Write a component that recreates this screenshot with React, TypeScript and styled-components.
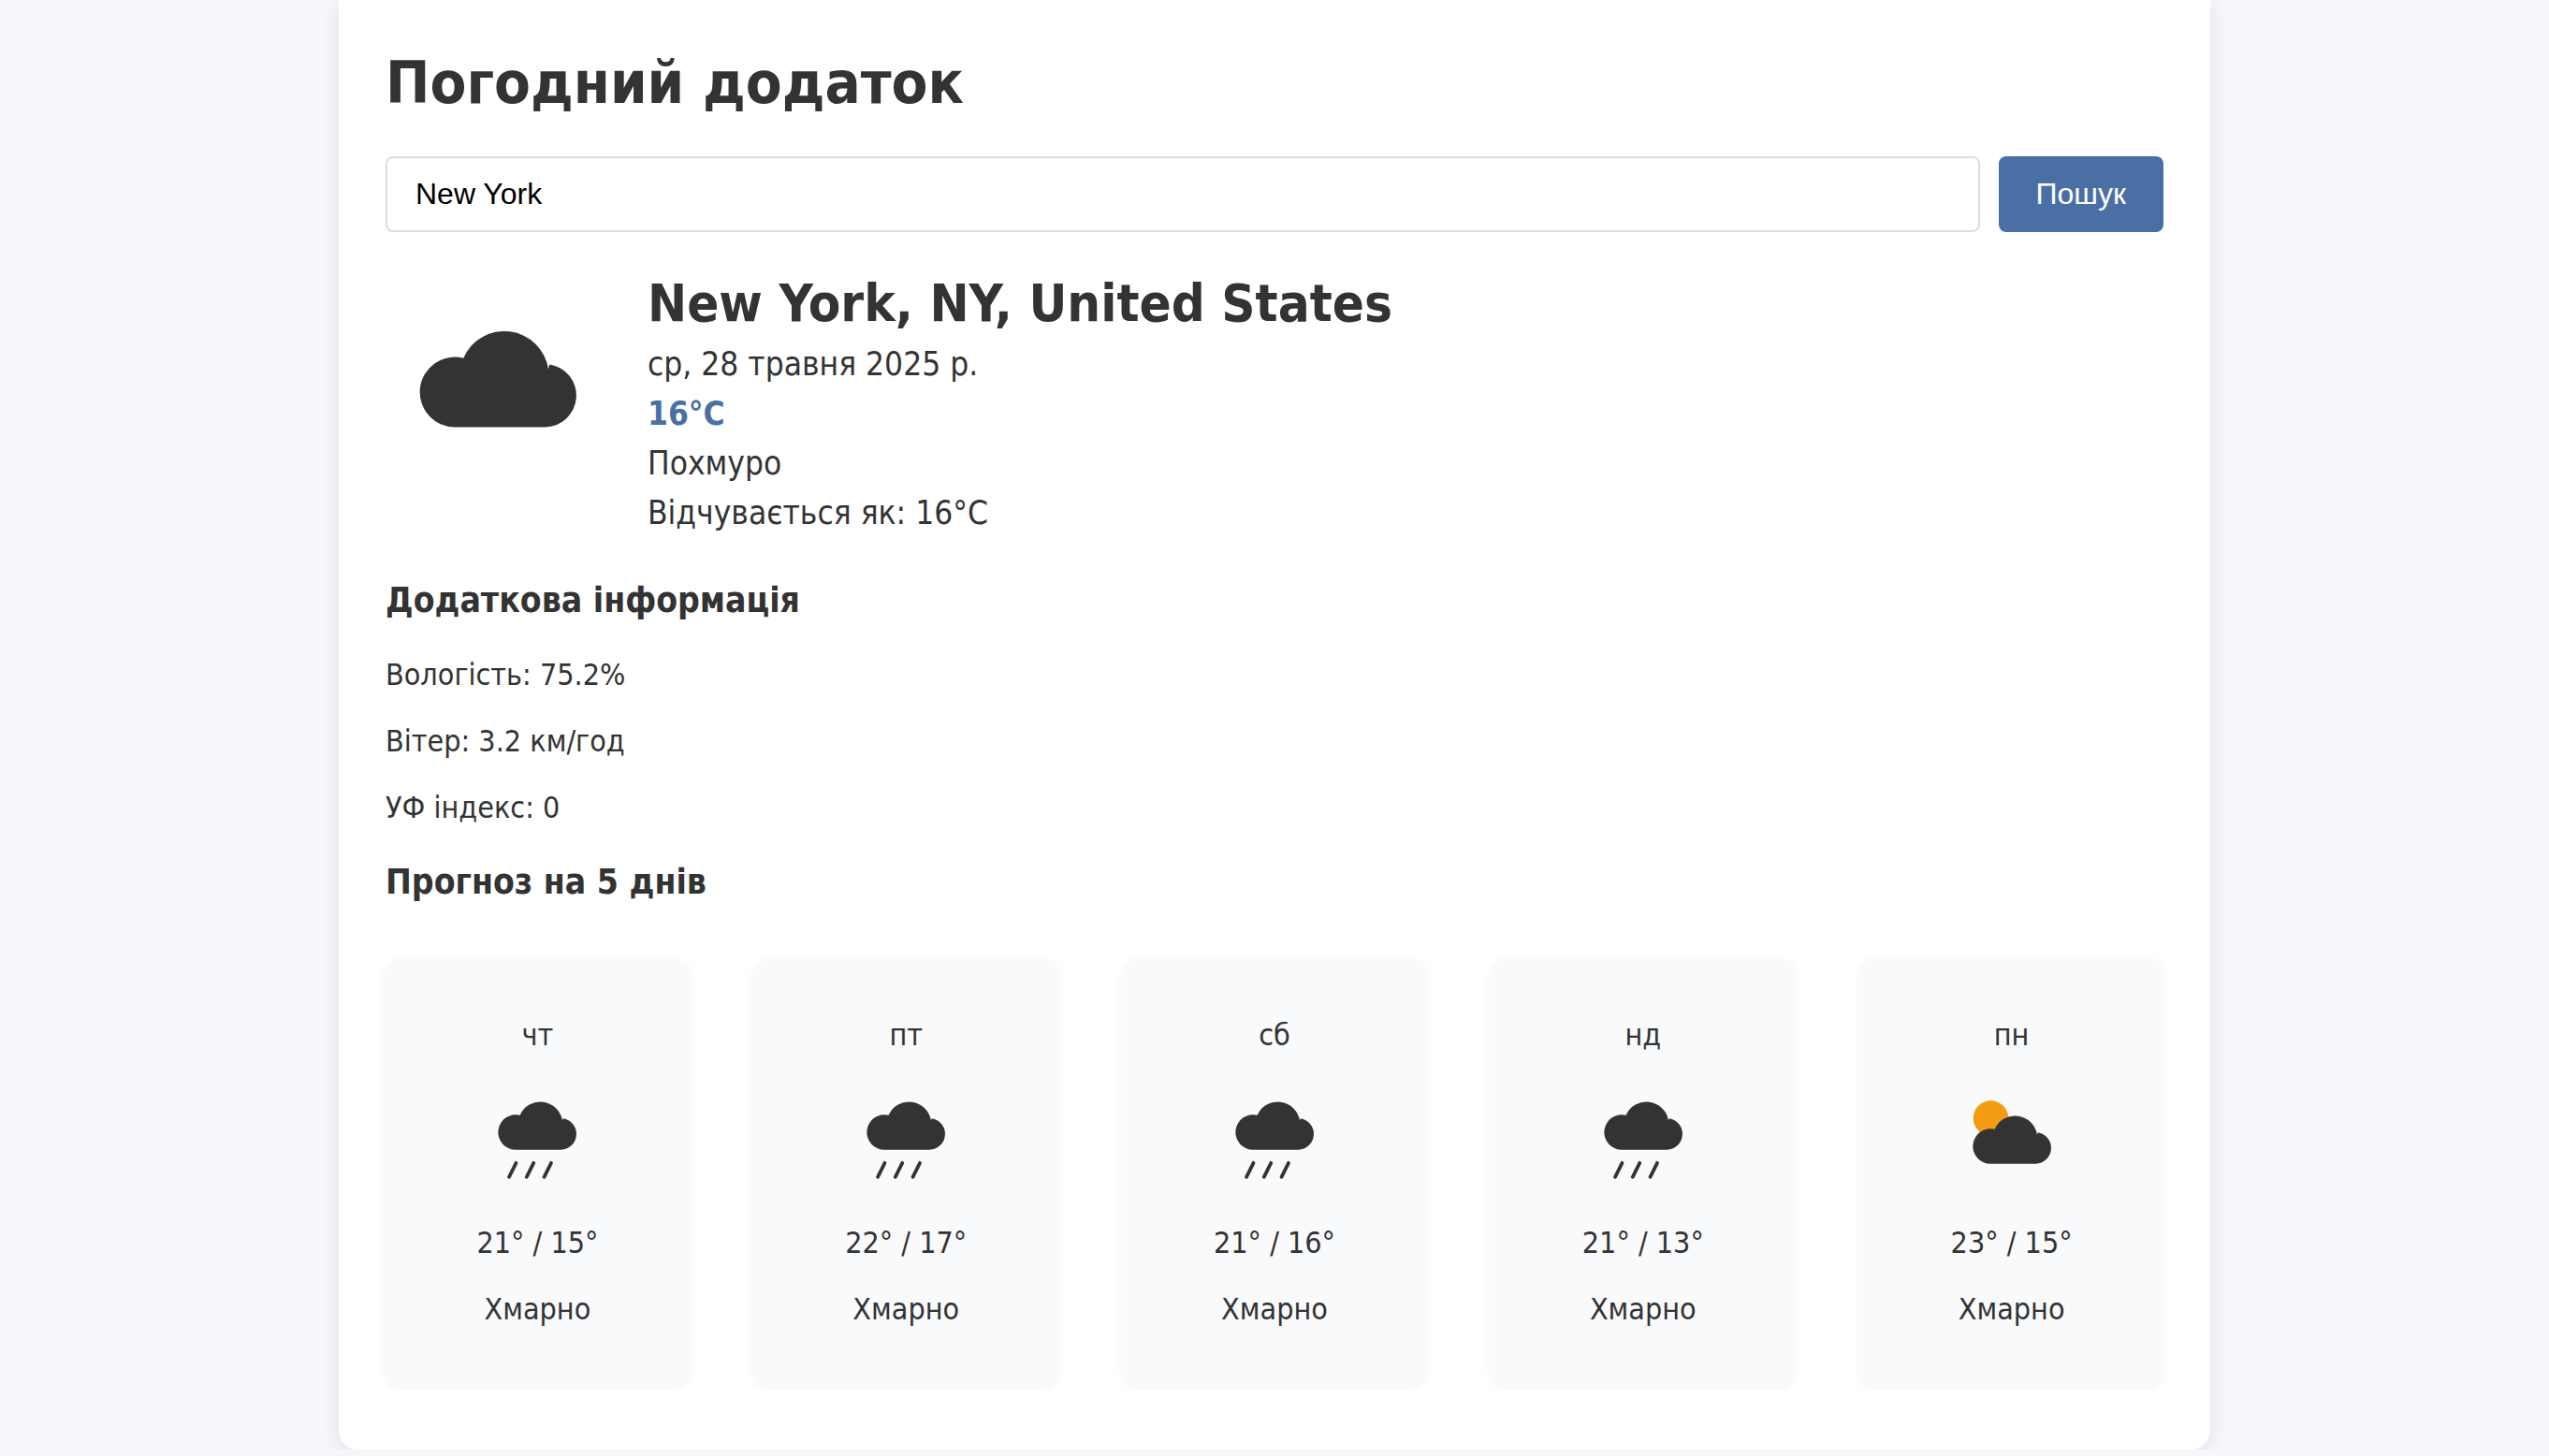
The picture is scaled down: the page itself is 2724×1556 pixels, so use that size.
import React, { useState } from "react";
import styled, { createGlobalStyle } from "styled-components";

const GlobalStyle = createGlobalStyle`
  *, *::before, *::after { box-sizing: border-box; }
  body {
    margin: 0;
    background: #f5f7fb;
    color: #333;
    font-family: Tahoma, "DejaVu Sans Condensed", "Noto Sans", sans-serif;
    font-size: 32px;
    line-height: 51px;
  }
  h1, h2, h3, p { margin: 0; }
`;

const Container = styled.main`
  max-width: 2000px;
  margin: 0 auto;
  padding: 38px 50px 68px;
  background: #fff;
  border-radius: 0 0 20px 20px;
  box-shadow: 0 4px 20px rgba(0, 0, 0, 0.1);
`;

const Title = styled.h1`
  font-size: 63px;
  line-height: 102px;
`;

const SearchForm = styled.form`
  display: flex;
  gap: 20px;
  margin-top: 27px;
`;

const SearchInput = styled.input`
  flex: 1;
  min-width: 0;
  padding: 20px 30px;
  border: 2px solid #ddd;
  border-radius: 8px;
  background: #fff;
  color: #000;
  font: 32px/37px Arial, "Liberation Sans", sans-serif;
`;

const SearchButton = styled.button`
  padding: 20px 40px;
  border: 0;
  border-radius: 8px;
  background: #4a6fa5;
  color: #fff;
  font: 32px/37px Arial, "Liberation Sans", sans-serif;
  cursor: pointer;
`;

const Current = styled.section`
  display: flex;
  align-items: center;
  gap: 40px;
  margin: 37px 0;
`;

const IconSvg = styled.svg<{ $size: number }>`
  display: block;
  flex: none;
  width: ${(p) => p.$size}px;
  height: ${(p) => p.$size}px;
`;

const CurrentIcon = styled.div`
  padding-bottom: 22px;
`;

const City = styled.h2`
  font-size: 56px;
  line-height: 78px;
`;

const CurrentLine = styled.p<{ $accent?: boolean }>`
  font-size: 35px;
  line-height: 53px;
  ${(p) => p.$accent && "color: #4a6fa5; font-weight: bold;"}
`;

const SectionTitle = styled.h3`
  font-size: 37px;
  line-height: 60px;
`;

const Details = styled.div`
  display: flex;
  flex-direction: column;
  gap: 20px;
  margin: 24px 0;
`;

const Forecast = styled.div`
  display: grid;
  grid-template-columns: repeat(5, 1fr);
  gap: 69px;
  margin-top: 52px;
`;

const DayCard = styled.article`
  display: flex;
  flex-direction: column;
  align-items: center;
  padding: 56px 20px;
  border-radius: 16px;
  background: #f9fafc;
  box-shadow: 0 2px 10px rgba(0, 0, 0, 0.05);
  text-align: center;
`;

const DayIcon = styled.div`
  margin: 18px 0 33px;
`;

const DayText = styled.p`
  margin-top: 20px;
`;

type Kind = "cloud" | "rain" | "partly";

const CLOUD =
  "M20 42A10 10 0 1 1 22.2 22.3A12.7 12.7 0 0 1 46.4 25.4L46.7 24.1A9 9 0 0 1 45.5 42Z";

function WeatherIcon({ kind, size }: { kind: Kind; size: number }) {
  return (
    <IconSvg $size={size} viewBox="0 0 64 64" aria-hidden="true">
      {kind === "partly" && <circle cx="20" cy="24" r="10" fill="#f39c12" />}
      <path d={CLOUD} fill="#333" transform={kind === "partly" ? "translate(0 8)" : undefined} />
      {kind === "rain" && (
        <path
          d="M20 49.5L16 57.5M30 49.5L26 57.5M40 49.5L36 57.5"
          fill="none"
          stroke="#333"
          strokeWidth="2"
          strokeLinecap="round"
        />
      )}
    </IconSvg>
  );
}

const days: { day: string; kind: Kind; temp: string }[] = [
  { day: "чт", kind: "rain", temp: "21° / 15°" },
  { day: "пт", kind: "rain", temp: "22° / 17°" },
  { day: "сб", kind: "rain", temp: "21° / 16°" },
  { day: "нд", kind: "rain", temp: "21° / 13°" },
  { day: "пн", kind: "partly", temp: "23° / 15°" },
];

export default function App() {
  const [city, setCity] = useState("New York");
  return (
    <>
      <GlobalStyle />
      <Container>
        <Title>Погодний додаток</Title>
        <SearchForm onSubmit={(e) => e.preventDefault()}>
          <SearchInput
            type="text"
            aria-label="Місто"
            value={city}
            onChange={(e) => setCity(e.target.value)}
          />
          <SearchButton type="submit">Пошук</SearchButton>
        </SearchForm>
        <Current>
          <CurrentIcon>
            <WeatherIcon kind="cloud" size={240} />
          </CurrentIcon>
          <div>
            <City>New York, NY, United States</City>
            <CurrentLine>ср, 28 травня 2025 р.</CurrentLine>
            <CurrentLine $accent>16°C</CurrentLine>
            <CurrentLine>Похмуро</CurrentLine>
            <CurrentLine>Відчувається як: 16°C</CurrentLine>
          </div>
        </Current>
        <SectionTitle>Додаткова інформація</SectionTitle>
        <Details>
          <p>Вологість: 75.2%</p>
          <p>Вітер: 3.2 км/год</p>
          <p>УФ індекс: 0</p>
        </Details>
        <SectionTitle>Прогноз на 5 днів</SectionTitle>
        <Forecast>
          {days.map((d) => (
            <DayCard key={d.day}>
              <p>{d.day}</p>
              <DayIcon>
                <WeatherIcon kind={d.kind} size={120} />
              </DayIcon>
              <p>{d.temp}</p>
              <DayText>Хмарно</DayText>
            </DayCard>
          ))}
        </Forecast>
      </Container>
    </>
  );
}
